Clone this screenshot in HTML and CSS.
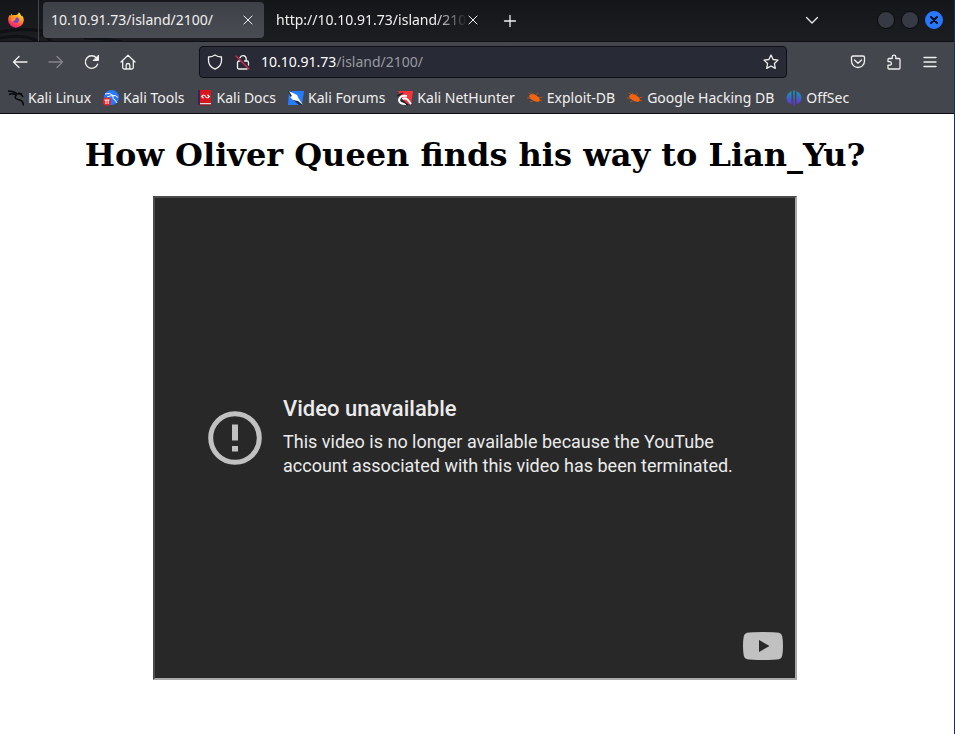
FILE: index.html
```html
<!DOCTYPE html>
<html lang="en">
<head>
<meta charset="utf-8">
<title>10.10.91.73/island/2100/</title>
<link rel="stylesheet" href="styles.css">
</head>
<body>
<div class="window">
<header class="chrome">
  <div class="tabbar">
    <svg class="scales" viewBox="0 0 130 42" aria-hidden="true"><path d="M0 32Q28 26 55 34M0 38Q25 33 39 42M40 34Q48 38 52 42M84 38Q105 38 122 42"/></svg>
    <div class="pinned">
      <svg class="icon16" viewBox="0 0 16 16" aria-hidden="true">
        <defs><linearGradient id="fox" x1="0.8" y1="0" x2="0.3" y2="1"><stop offset="0" stop-color="#fff04a"/><stop offset=".4" stop-color="#ff9a1f"/><stop offset=".75" stop-color="#ff4055"/><stop offset="1" stop-color="#e91e83"/></linearGradient></defs>
        <path fill="url(#fox)" d="M10.8.2c1.1.8 1.700 1.800 1.900 2.800.5.3.7.8.8 1.200l.7-.4c1.300 1.800 1.800 3.300 1.500 5.200A7.800 7.800 0 0 1 .2 8.400C0 6 .8 4.200 1.900 2.800L2 4l2-2.600v2c1-.5 2-.6 3-.3C8.500 3 10.500 2.500 10.800.2z"/>
        <circle cx="8" cy="8" r="3" fill="#7144d9"/>
        <path fill="#ff9420" d="M3.500 4.500c1.500-1 3-.8 4 .2l2 .1c-.2 1-1.500 1.300-2 1.600-.2 1 .3 1.500-.8 2-1.500 0-2 1.500-3.200.8z"/>
      </svg>
    </div>
    <div class="tab active">
      <span class="title">10.10.91.73/island/2100/</span>
      <button class="close" aria-label="Close tab"><svg viewBox="0 0 10 10"><path d="M1 1l8 8M9 1L1 9"/></svg></button>
    </div>
    <div class="tab">
      <span class="title fade">http://10.10.91.73/island/2100/</span>
      <button class="close" aria-label="Close tab"><svg viewBox="0 0 10 10"><path d="M1 1l8 8M9 1L1 9"/></svg></button>
    </div>
    <button class="newtab" aria-label="New tab"><svg viewBox="0 0 12 12"><path d="M6 .5v11M.5 6h11"/></svg></button>
    <button class="alltabs" aria-label="List all tabs"><svg viewBox="0 0 14 8"><path d="M1.500 1.500L7 7l5.500-5.500"/></svg></button>
    <div class="controls">
      <button class="dot" aria-label="Minimize"></button>
      <button class="dot" aria-label="Maximize"></button>
      <button class="dot quit" aria-label="Close window"><svg viewBox="0 0 18 18"><path d="M6 6l6 6M12 6l-6 6"/></svg></button>
    </div>
  </div>

  <div class="toolbar">
    <div class="nav">
      <button aria-label="Back"><svg viewBox="0 0 16 16"><path d="M15 8H1.500M7 2.500L1.500 8 7 13.500"/></svg></button>
      <button aria-label="Forward" disabled><svg viewBox="0 0 16 16"><path d="M1 8h13.500M9 2.500L14.500 8 9 13.500"/></svg></button>
      <button aria-label="Reload"><svg viewBox="0 0 16 16"><path d="M13.600 10.200A6.300 6.300 0 1 1 12.500 4"/><path class="solid" d="M14.500 1.500v5h-5z"/></svg></button>
      <button aria-label="Home"><svg viewBox="0 0 16 16"><path d="M1 8l7-6.800L15 8M2.700 7v6.500q0 1.500 1.500 1.500h7.600q1.500 0 1.500-1.500V7M6.200 15v-4q0-1.500 1.800-1.500t1.800 1.500v4"/></svg></button>
    </div>
    <div class="urlbar">
      <svg class="icon16 line" viewBox="0 0 16 16" aria-hidden="true"><path d="M8 1c2 1.400 4.200 2 6.500 2v3.500c0 4-2.500 7-6.500 8.700C4 13.500 1.500 10.500 1.500 6.500V3C3.800 3 6 2.400 8 1z"/></svg>
      <svg class="icon16 line" viewBox="0 0 16 16" aria-hidden="true"><path d="M5 3.800a3.200 3.200 0 0 1 6.200.7V7M9.500 7H12q1.500 0 1.500 1.500V11M12 15H4q-1.500 0-1.500-1.500v-5Q2.500 7 4 7h.8"/><path class="slash" d="M1 2l13 13"/></svg>
      <p class="address">10.10.91.73<span>/island/2100/</span></p>
      <button aria-label="Bookmark this page"><svg viewBox="0 0 16 16"><path d="M8 1l2.100 4.500 4.900.6-3.600 3.400.9 4.900L8 12l-4.300 2.400.9-4.900L1 6.100l4.900-.6z"/></svg></button>
    </div>
    <div class="tools">
      <button aria-label="Save to Pocket"><svg viewBox="0 0 16 16"><path d="M3 2h10q1.500 0 1.500 1.500V7a6.500 6.500 0 0 1-13 0V3.500Q1.500 2 3 2zM4.500 6L8 9.300 11.500 6"/></svg></button>
      <button aria-label="Extensions"><svg viewBox="0 0 16 16"><path d="M2 14V11.200h1.600a1.800 1.800 0 0 0 0-3.600H2V5.500Q2 4.500 3 4.500h3.200V3a1.800 1.800 0 0 1 3.600 0v1.500H13q1 0 1 1V14q0 1-1 1H3q-1 0-1-1z"/></svg></button>
      <button aria-label="Menu"><svg viewBox="0 0 16 16"><path d="M2 3.500h12M2 8h12M2 12.500h12"/></svg></button>
    </div>
  </div>

  <nav class="bookmarks">
    <a href="#"><svg class="icon16" viewBox="0 0 16 16" aria-hidden="true"><path class="dragon" d="M0 1q6 0 9 3 4-1 6 3M1 4.500q4-1.500 7 .5M9 4q-4 4.500 1 5.500 5 .5 5.500 6M10 3l4 1"/></svg>Kali Linux</a>
    <a href="#"><svg class="icon16" viewBox="0 0 16 16" aria-hidden="true"><circle cx="8.500" cy="7.500" r="7.500" fill="#2777ff"/><path d="M2 4q5-2 8 1.500 3-.5 5 2M4 7q4-2 6-1-1 3 2 4l2 3" fill="none" stroke="#fff"/><rect y="7.500" width="8" height="8" rx="3" fill="#e0262b"/><path d="M1.500 10h5M3 10v4M5.200 10v4" stroke="#fff"/></svg>Kali Tools</a>
    <a href="#"><svg class="icon16" viewBox="0 0 16 16" aria-hidden="true"><path fill="#34265c" d="M1 0h2v15H1z"/><path fill="#d9141a" d="M3 0h11v13H3z"/><path fill="#ddd" d="M3 13h11v1.500H3z"/><path d="M2 15h12" stroke="#a11"/><path d="M6.500 4.800L4.700 6.500l1.800 1.700M10.500 4.800l1.800 1.700-1.800 1.700M7.300 5l2.400 3" fill="none" stroke="#fff" stroke-width="1.200"/></svg>Kali Docs</a>
    <a href="#"><svg class="icon16" viewBox="0 0 16 16" aria-hidden="true"><path fill="#247cff" d="M1 1h15l-2 14H0z"/><path fill="#202b42" d="M0 1h3l12 14h-4L3 8z"/><path fill="#fff" d="M1 1l8 4 2 4 4 6-5-4-5-1-3-3 2-1z"/></svg>Kali Forums</a>
    <a href="#"><svg class="icon16" viewBox="0 0 16 16" aria-hidden="true"><path fill="#f5333a" d="M1 1h15l-2 14-5-2-5-7z"/><path d="M14 14L10.500 9.500Q8 7.500 5.500 9M9 14q-7 0-7-4 1-5 8-4" fill="none" stroke="#fff" stroke-width="2"/><path d="M0 6l6-3M4 10l7 5" stroke="#171c28" stroke-width="1.300"/></svg>Kali NetHunter</a>
    <a href="#"><svg class="icon16 bug" viewBox="0 0 16 16" aria-hidden="true"><path class="shell" d="M2 6l2-2 4 .5 4 3 1.500 3L11 12l-4-1-4-2.500z"/><path d="M4 4L1.500 3M6 4L5 2.500M9 5l2-2M12 8l3.500-1M12 10l3 1M6 11l-3 1M3 8L0 8"/></svg>Exploit-DB</a>
    <a href="#"><svg class="icon16 bug" viewBox="0 0 16 16" aria-hidden="true"><path class="shell" d="M2 6l2-2 4 .5 4 3 1.500 3L11 12l-4-1-4-2.500z"/><path d="M4 4L1.500 3M6 4L5 2.500M9 5l2-2M12 8l3.500-1M12 10l3 1M6 11l-3 1M3 8L0 8"/></svg>Google Hacking DB</a>
    <a href="#"><svg class="icon16" viewBox="0 0 16 16" aria-hidden="true"><defs><linearGradient id="off" x1="0" y1="0" x2="0" y2="1"><stop stop-color="#129fb4"/><stop offset="1" stop-color="#6a28dc"/></linearGradient></defs><path fill="url(#off)" d="M5.500 1v13.500Q.5 12.500.5 8t5-7zM7.200.5h1.600v15H7.200zM10.500 1v13.500q5-2 5-6.500t-5-7z"/></svg>OffSec</a>
  </nav>
</header>

<main class="page">
  <h1>How Oliver Queen finds his way to Lian_Yu?</h1>
  <section class="video">
    <div class="notice">
      <svg class="alert" viewBox="0 0 54 54" aria-hidden="true"><circle cx="27" cy="27" r="24.300"/><path d="M24 13.500h6v16h-6zM24 35h6v5.500h-6z"/></svg>
      <div>
        <h2>Video unavailable</h2>
        <p>This video is no longer available because the YouTube account associated with this video has been terminated.</p>
      </div>
    </div>
    <button class="youtube" aria-label="Watch on YouTube"><svg viewBox="0 0 40 28"><path fill="#c1c1c1" d="M20 0q12 0 16 .8 2.700.6 3.200 3.500Q40 8 40 14t-.8 9.700q-.5 2.900-3.200 3.500Q32 28 20 28T4 27.200Q1.300 26.600.8 23.700 0 20 0 14t.8-9.700Q1.300 1.400 4 .8 8 0 20 0z"/><path fill="#282828" d="M16 8v12l10.500-6z"/></svg></button>
  </section>
</main>
</div>
</body>
</html>
```
FILE: styles.css
```css
* { box-sizing: border-box; }
body { margin: 0; background: #fff; }
button { border: 0; padding: 0; background: none; color: inherit; display: flex; align-items: center; justify-content: center; flex: none; }
svg { display: block; flex: none; }
.window { min-height: 100vh; border-right: 1px solid #1d2f50; }
.icon16 { width: 16px; height: 16px; }

.chrome { background: #44464d; color: #f0f0ee; font: 14px/20px "Noto Sans", sans-serif; border-bottom: 1px solid #0c0c0e; }
.chrome button svg, .line { fill: none; stroke: currentColor; stroke-width: 1.3px; stroke-linecap: round; stroke-linejoin: round; }

.tabbar { position: relative; height: 42px; display: flex; align-items: center; background: linear-gradient(#15161a, #1c1d21); border-bottom: 1px solid #0e0f12; }
.scales { position: absolute; left: 0; top: 0; width: 130px; height: 42px; fill: none; stroke: #101115; stroke-width: 3px; }
.pinned { position: relative; width: 39px; height: 41px; display: flex; align-items: center; padding: 0 0 2px 8px; border-right: 1px solid #44464d; }
.tab { position: relative; width: 221px; height: 36px; margin: 0 0 1px 4px; padding: 0 10px 0 8px; display: flex; align-items: center; border-radius: 4px; }
.tab.active { background: linear-gradient(#3e4047, #4a4c53); }
.title { flex: 1; min-width: 0; white-space: nowrap; overflow: hidden; }
.fade { mask-image: linear-gradient(to left, transparent, #000 32px); }
.close { width: 12px; height: 20px; }
.close svg { width: 10px; height: 10px; }
.chrome .close svg { stroke-width: 1px; }
.newtab { width: 32px; height: 32px; margin-left: 5px; }
.newtab svg { width: 12px; height: 12px; overflow: visible; }
.alltabs { width: 32px; height: 32px; margin: 0 0 2px auto; }
.alltabs svg { width: 14px; height: 8px; }
.controls { display: flex; gap: 6px; margin: 0 11px 2px 49px; }
.dot { width: 18px; height: 18px; border-radius: 50%; background: #363a45; border: 1px solid #0b0b0d; }
.dot.quit { background: #2777ff; border-color: #2777ff; color: #090b12; }
.chrome .quit svg { width: 18px; height: 18px; stroke-width: 2px; }

.toolbar { height: 42px; display: flex; align-items: center; padding: 0 14px 2px 10px; }
.nav, .tools { display: flex; gap: 16px; }
.nav button, .tools button { width: 20px; height: 32px; }
.nav svg, .tools svg, .urlbar svg { width: 16px; height: 16px; }
.nav button:disabled { color: #85868a; }
.solid { fill: currentColor; stroke-width: 1px; }
.urlbar { flex: 0 1 588px; margin: 0 auto 0 61px; height: 32px; display: flex; align-items: center; gap: 12px; padding: 0 7px; background: #282a36; border: 1px solid #0e1016; border-radius: 4px; }
.slash { stroke: #e22850; }
.address { flex: 1; min-width: 0; margin: 0 0 0 -2px; white-space: nowrap; color: #fff; }
.address span { color: #9a9ba1; }

.bookmarks { height: 29px; padding: 0 8px 2px; display: flex; align-items: center; gap: 12px; overflow: hidden; }
.bookmarks a { display: flex; align-items: center; gap: 4px; color: inherit; text-decoration: none; white-space: nowrap; }
.dragon { fill: none; stroke: #08090c; stroke-width: 1.5px; }
.bug { fill: none; stroke: #a8521f; stroke-width: 1px; }
.shell { fill: #f4640f; stroke: none; }

.page { padding: 22px 12px 24px 8px; }
h1 { margin: 0 0 22px; font: bold 32px/38px "DejaVu Serif", serif; text-align: center; color: #000; }
.video { position: relative; max-width: 644px; height: 484px; margin: 0 auto; display: flex; align-items: center; justify-content: center; background: #282828; border: 2px solid; border-color: #4b4b4b #a9a9a9 #a9a9a9 #4b4b4b; color: #ebebeb; font-family: Roboto, sans-serif; }
.notice { display: flex; align-items: center; gap: 21px; width: 534px; }
.alert { width: 54px; height: 54px; fill: #c1c1c1; }
.alert circle { fill: none; stroke: #c1c1c1; stroke-width: 5px; }
h2 { margin: 0 0 8px; font-size: 22px; line-height: 26px; font-weight: 500; }
.notice p { margin: 0 0 2px; font-size: 18px; line-height: 24px; }
.youtube { position: absolute; right: 12px; bottom: 18px; }
.youtube svg { width: 40px; height: 28px; }
```
